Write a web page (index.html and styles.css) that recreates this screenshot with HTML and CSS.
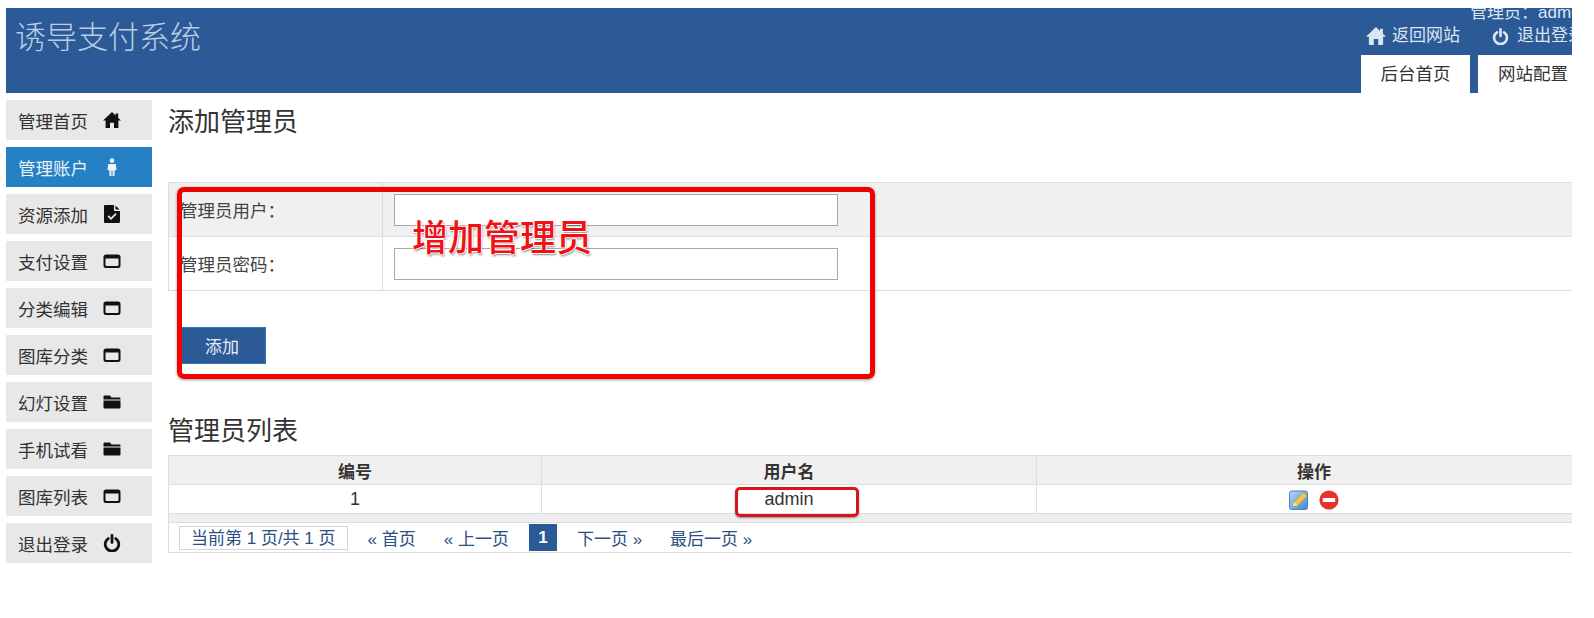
FILE: index.html
```html
<!DOCTYPE html>
<html lang="zh-CN">
<head>
    <meta charset="UTF-8">
    <title>诱导支付系统</title>
    <link rel="stylesheet" href="styles.css">
</head>
<body>
    <svg class="defs" width="0" height="0">
        <symbol id="i-home" viewBox="0 0 18 18">
            <path d="M9 1 0 9.6H2.6V17H7V11.8H11V17H15.4V9.6H18L15.2 6.9V2.4H12.6V4.4Z"/>
        </symbol>
        <symbol id="i-window" viewBox="0 0 18 18">
            <path fill-rule="evenodd" d="M3 2.5H15A2.5 2.5 0 0 1 17.5 5V13.5A2.5 2.5 0 0 1 15 16H3A2.5 2.5 0 0 1 .5 13.5V5A2.5 2.5 0 0 1 3 2.5ZM2.5 6.5V13A1 1 0 0 0 3.5 14H14.5A1 1 0 0 0 15.5 13V6.5Z"/>
        </symbol>
        <symbol id="i-folder" viewBox="0 0 18 18">
            <path d="M1.5 2.5H7L8.5 4.5H16.5A1 1 0 0 1 17.5 5.5V6.5H.5V3.5A1 1 0 0 1 1.5 2.5ZM.5 7.5H17.5V14.5A1 1 0 0 1 16.5 15.5H1.5A1 1 0 0 1 .5 14.5Z"/>
        </symbol>
        <symbol id="i-power" viewBox="0 0 18 18">
            <path fill="none" stroke="currentColor" stroke-width="2.8" stroke-linecap="round" d="M9 1.5V8.5M5.2 4.6A6.8 6.8 0 1 0 12.8 4.6"/>
        </symbol>
    </svg>

    <div class="page">
        <div class="header">
            <div class="logo">诱导支付系统</div>
            <div class="header-right">
                <div class="user-line">管理员：admin</div>
                <div class="top-links">
                    <a class="top-link"><svg class="top-icon"><use href="#i-home"/></svg>返回网站</a>
                    <a class="top-link"><svg class="top-icon top-power"><use href="#i-power"/></svg>退出登录</a>
                </div>
                <div class="tabs">
                    <a class="tab">后台首页</a>
                    <a class="tab">网站配置</a>
                </div>
            </div>
        </div>

        <div class="body-row">
            <div class="sidebar">
                <a class="nav-item">管理首页<svg class="nav-icon"><use href="#i-home"/></svg></a>
                <a class="nav-item active">管理账户
                    <svg class="nav-icon" viewBox="0 0 18 18"><circle cx="9" cy="2.6" r="2.3"/><path d="M5.2 6H12.8L13.6 12H11.8L11.4 18.5H9.5V13H8.5V18.5H6.6L6.2 12H4.4Z"/></svg>
                </a>
                <a class="nav-item">资源添加
                    <svg class="nav-icon" viewBox="0 0 18 18"><path fill-rule="evenodd" d="M2 0H11V6H17V17A1 1 0 0 1 16 18H2A1 1 0 0 1 1 17V1A1 1 0 0 1 2 0ZM12.5 .5 16.5 4.5H12.5ZM4.5 11.5 5.8 10.2 8 12.4 12.4 8 13.7 9.3 8 15Z"/></svg>
                </a>
                <a class="nav-item">支付设置<svg class="nav-icon"><use href="#i-window"/></svg></a>
                <a class="nav-item">分类编辑<svg class="nav-icon"><use href="#i-window"/></svg></a>
                <a class="nav-item">图库分类<svg class="nav-icon"><use href="#i-window"/></svg></a>
                <a class="nav-item">幻灯设置<svg class="nav-icon"><use href="#i-folder"/></svg></a>
                <a class="nav-item">手机试看<svg class="nav-icon"><use href="#i-folder"/></svg></a>
                <a class="nav-item">图库列表<svg class="nav-icon"><use href="#i-window"/></svg></a>
                <a class="nav-item">退出登录<svg class="nav-icon"><use href="#i-power"/></svg></a>
            </div>

            <div class="content">
                <div class="title title-first">添加管理员</div>

                <form>
                    <table class="form-table">
                        <tr class="row-grey">
                            <td class="form-label">管理员用户：</td>
                            <td><input type="text" class="form-input"></td>
                        </tr>
                        <tr>
                            <td class="form-label">管理员密码：</td>
                            <td><input type="password" class="form-input"></td>
                        </tr>
                    </table>
                    <button type="button" class="add-btn">添加</button>
                </form>

                <div class="title title-list">管理员列表</div>

                <table class="list-table">
                    <tr>
                        <th class="col-id">编号</th>
                        <th class="col-name">用户名</th>
                        <th>操作</th>
                    </tr>
                    <tr>
                        <td>1</td>
                        <td>admin</td>
                        <td>
                            <svg class="op-icon" viewBox="0 0 20 20">
                                <defs>
                                    <linearGradient id="edit-bg" x1="0" y1="0" x2="1" y2="1">
                                        <stop offset="0" stop-color="#b9d8f5"/>
                                        <stop offset="1" stop-color="#3f86d6"/>
                                    </linearGradient>
                                </defs>
                                <rect x=".5" y="1" width="18" height="18.5" rx="2" fill="url(#edit-bg)" stroke="#4a86c6"/>
                                <path d="M4 16 5 12 14.5 2.5 18 6 8.5 15.5Z" fill="#f3c544" stroke="#c9962a" stroke-width=".6"/>
                                <path d="M4 16 5 12 8.5 15.5Z" fill="#f6e3b4"/>
                            </svg>
                            <svg class="op-icon op-del" viewBox="0 0 20 20">
                                <circle cx="10" cy="10" r="9.6" fill="#e8322c"/>
                                <rect x="3.8" y="8" width="12.4" height="4" rx=".6" fill="#fff"/>
                            </svg>
                        </td>
                    </tr>
                    <tr class="row-strip"><td colspan="3"></td></tr>
                    <tr>
                        <td colspan="3" class="pager-cell">
                            <div class="pager">
                                <span class="pager-info">当前第 1 页/共 1 页</span>
                                <a class="pager-link pager-first">« 首页</a>
                                <a class="pager-link">« 上一页</a>
                                <span class="pager-current">1</span>
                                <a class="pager-link">下一页 »</a>
                                <a class="pager-link">最后一页 »</a>
                            </div>
                        </td>
                    </tr>
                </table>

                <!-- red marks drawn on top of the screenshot -->
                <div class="mark-box"></div>
                <div class="mark-text">增加管理员</div>
                <div class="mark-name"></div>
            </div>
        </div>
    </div>
</body>
</html>
```

FILE: styles.css
```css
body {
    font-family: "Liberation Sans", "Noto Sans CJK SC", sans-serif;
    background-color: #fff;
    color: #333;
    margin: 0;
    padding: 0;
}

.defs {
    position: absolute;
}

.page {
    width: 1566px;
    margin: 8px 0 0 6px;
    overflow: hidden;
}

/* header */
.header {
    display: flex;
    height: 85px;
    background-color: #2b5a97;
    overflow: hidden;
}

.logo {
    flex: 0 0 1355px;
    padding: 10px 0 0 9px;
    box-sizing: border-box;
    font-size: 31px;
    line-height: 40px;
    font-weight: 300;
    color: #b9cde6;
}

.header-right {
    flex: 0 0 240px;
    font-size: 17px;
    line-height: 20px;
    color: #dbe6f3;
}

.user-line {
    margin: -5px 0 0 109px;
    white-space: nowrap;
}

.top-links {
    display: flex;
    margin: 3px 0 9px 5px;
}

.top-link {
    display: flex;
    align-items: center;
    width: 126px;
    flex-shrink: 0;
    white-space: nowrap;
}

.top-icon {
    width: 20px;
    height: 20px;
    fill: #dbe6f3;
    margin-right: 6px;
}

.top-power {
    width: 17px;
    height: 17px;
    color: #dbe6f3;
    margin-right: 8px;
}

.tabs {
    display: flex;
    gap: 8px;
}

.tab {
    flex: 0 0 109px;
    height: 38px;
    line-height: 38px;
    text-align: center;
    background-color: #fff;
    color: #333;
    white-space: nowrap;
    font-size: 17.5px;
}

.tab + .tab {
    flex-basis: 110px;
}

/* sidebar */
.body-row {
    display: flex;
}

.sidebar {
    flex: 0 0 146px;
    display: flex;
    flex-direction: column;
    gap: 7px;
    padding-top: 7px;
}

.nav-item {
    display: flex;
    align-items: center;
    height: 40px;
    padding-left: 12px;
    background-color: #e8e8e8;
    font-size: 17.5px;
    color: #333;
}

.nav-item.active {
    background-color: #2581c4;
    color: #e8f2fa;
}

.nav-icon {
    width: 18px;
    height: 18px;
    margin-left: 15px;
    fill: #111;
    color: #111;
}

.active .nav-icon {
    fill: #e8f2fa;
}

/* content */
.content {
    flex: 0 0 1424px;
    margin-left: 16px;
    position: relative;
}

.title {
    font-size: 26px;
    line-height: 30px;
    color: #333;
}

.title-first {
    margin-top: 14px;
    margin-bottom: 45px;
}

.title-list {
    margin-top: 52px;
    margin-bottom: 9px;
}

.form-table {
    width: 100%;
    table-layout: fixed;
    border-collapse: collapse;
    border-top: 1px solid #ddd;
    border-bottom: 1px solid #ddd;
}

.form-table td {
    height: 53px;
    padding: 0 0 0 11px;
    border: 1px solid #ddd;
    border-right: none;
}

.form-table td.form-label {
    width: 202px;
    padding-left: 11px;
    font-size: 17.5px;
    color: #444;
}

.row-grey td {
    background-color: #f0f0f0;
}

.form-input {
    display: block;
    width: 444px;
    height: 32px;
    box-sizing: border-box;
    border: 1px solid #a8a8a8;
    background-color: #fff;
}

.add-btn {
    display: block;
    width: 88px;
    height: 37px;
    margin: 36px 0 0 10px;
    background-color: #2b5a97;
    border: 1px solid #3277b5;
    color: #e4edf7;
    font-family: inherit;
    font-size: 17px;
    padding: 0;
}

.list-table {
    width: 100%;
    table-layout: fixed;
    border-collapse: collapse;
    border-top: 1px solid #ddd;
}

.list-table th,
.list-table td {
    height: 28px;
    padding: 0;
    text-align: center;
    font-size: 18px;
    border: 1px solid #ddd;
    border-top: none;
    color: #333;
}

.list-table th {
    background-color: #f0f0f0;
    font-size: 17px;
}

.col-id {
    width: 372px;
}

.col-name {
    width: 494px;
}

.list-table .row-strip td {
    height: 8px;
    background-color: #eee;
}

.op-icon {
    width: 20px;
    height: 20px;
    vertical-align: middle;
}

.op-del {
    margin-left: 5px;
}

.list-table td.pager-cell {
    height: 29px;
    text-align: left;
    padding-left: 10px;
}

.pager {
    display: flex;
    align-items: center;
    font-size: 17px;
    color: #2b4f83;
}

.pager-info {
    height: 24px;
    line-height: 24px;
    padding: 0 11px;
    border: 1px solid #d5d5d5;
    box-sizing: border-box;
    white-space: nowrap;
}

.pager-link {
    padding: 0 14px;
    white-space: nowrap;
}

.pager-first {
    margin-left: 6px;
}

.pager-current {
    width: 28px;
    height: 27px;
    line-height: 27px;
    margin: 0 6px;
    text-align: center;
    font-weight: bold;
    background-color: #2b5a97;
    color: #fff;
}

/* red annotations */
.mark-box {
    position: absolute;
    left: 9px;
    top: 94px;
    width: 698px;
    height: 192px;
    box-sizing: border-box;
    border: 5px solid #f40000;
    border-radius: 7px;
    box-shadow: 0 1px 3px rgba(0, 0, 0, 0.4);
}

.mark-text {
    position: absolute;
    left: 244px;
    top: 121px;
    font-size: 36px;
    line-height: 50px;
    font-weight: 500;
    color: #f01018;
    white-space: nowrap;
    text-shadow: 1px 0 #fff, -1px 0 #fff, 0 1px #fff, 0 -1px #fff, 1px 2px 2px rgba(0, 0, 0, 0.45);
}

.mark-name {
    position: absolute;
    left: 567px;
    top: 394px;
    width: 124px;
    height: 30px;
    box-sizing: border-box;
    border: 3px solid #d8141c;
    border-radius: 5px;
    box-shadow: 0 1px 2px rgba(0, 0, 0, 0.4);
}
```
